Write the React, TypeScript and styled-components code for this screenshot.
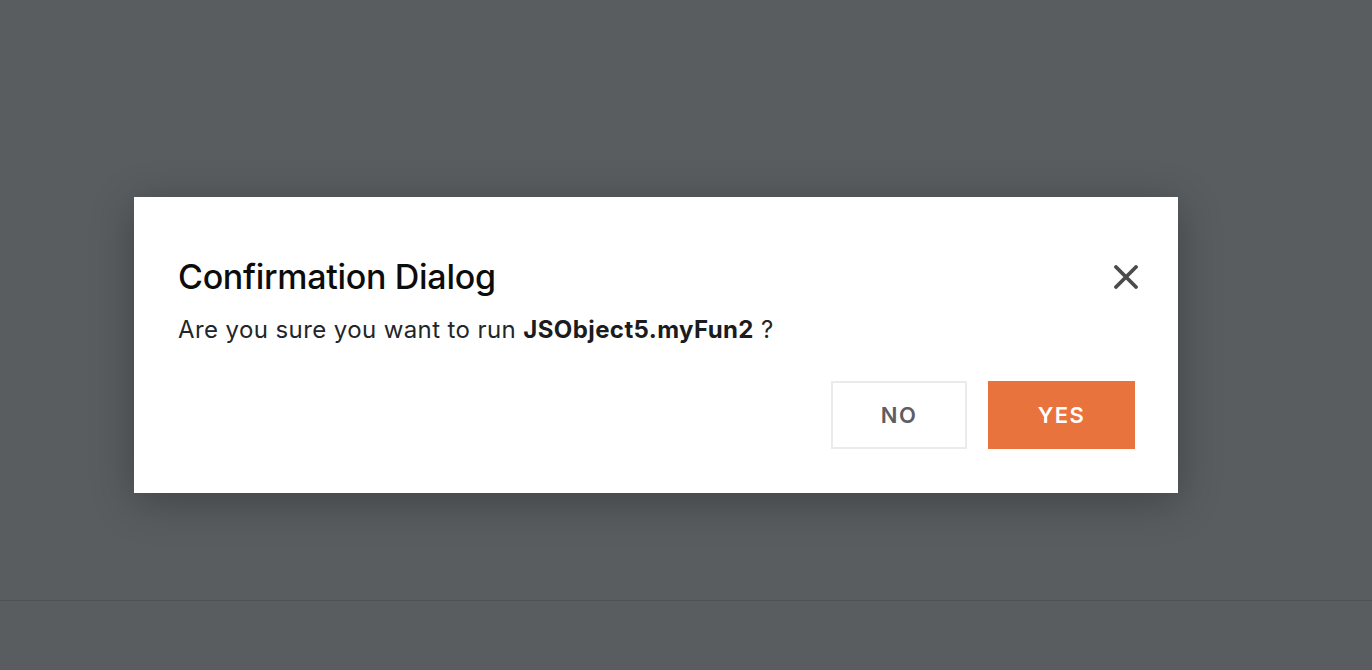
import React, { FC } from 'react';
import styled, { createGlobalStyle } from 'styled-components';

const GlobalStyle = createGlobalStyle`
  html, body {
    margin: 0;
    padding: 0;
    height: 100%;
  }
  body {
    font-family: Inter, 'Noto Sans', sans-serif;
    background: #595d60;
  }
`;

const Page = styled.div`
  display: flex;
  flex-direction: column;
  height: 670px;
  background: #595d60;
`;

const Stage = styled.div`
  flex: 1;
  display: flex;
  align-items: flex-start;
  padding: 197px 0 0 134px;
`;

const Footer = styled.div`
  height: 69px;
  border-top: 1px solid #4d5154;
`;

const Dialog = styled.div`
  width: 1044px;
  box-sizing: border-box;
  background: #ffffff;
  padding: 58px 43px 44px 44px;
  box-shadow: 0 8px 40px rgba(0, 0, 0, 0.28);
`;

const Header = styled.div`
  display: flex;
  align-items: center;
  justify-content: space-between;
`;

const Title = styled.h2`
  margin: 0;
  font-size: 34px;
  font-weight: 500;
  line-height: 44px;
  color: #0c0c0c;
  letter-spacing: -0.3px;
`;

const CloseButton = styled.button`
  display: flex;
  align-items: center;
  justify-content: center;
  width: 24px;
  height: 24px;
  padding: 0;
  margin-right: -3px;
  border: none;
  background: none;
  cursor: pointer;
`;

const Message = styled.p`
  margin: 15px 0 0;
  font-size: 24px;
  line-height: 32px;
  letter-spacing: 0.4px;
  color: #22252a;
`;

const Strong = styled.strong`
  font-weight: 700;
  color: #1a1c20;
`;

const Actions = styled.div`
  display: flex;
  justify-content: flex-end;
  gap: 21px;
  margin-top: 35px;
`;

const ActionButton = styled.button<{ $primary?: boolean }>`
  height: 68px;
  box-sizing: border-box;
  padding: 0;
  width: ${(p) => (p.$primary ? '147px' : '136px')};
  font-family: Inter, 'Noto Sans', sans-serif;
  font-size: 22px;
  font-weight: 600;
  letter-spacing: 1.4px;
  border: 2px solid ${(p) => (p.$primary ? '#e8733d' : '#ebebeb')};
  background: ${(p) => (p.$primary ? '#e8733d' : '#ffffff')};
  color: ${(p) => (p.$primary ? '#ffffff' : '#5e5d61')};
  cursor: pointer;
`;

const CloseIcon: FC = () => (
  <svg width="24" height="24" viewBox="0 0 24 24" fill="none">
    <path d="M2 2 L22 22 M22 2 L2 22" stroke="#4b4b4b" strokeWidth="3.8" strokeLinecap="round" />
  </svg>
);

const App: FC = () => (
  <>
    <GlobalStyle />
    <Page>
      <Stage>
        <Dialog role="dialog" aria-labelledby="confirm-title">
          <Header>
            <Title id="confirm-title">Confirmation Dialog</Title>
            <CloseButton aria-label="Close">
              <CloseIcon />
            </CloseButton>
          </Header>
          <Message>
            Are you sure you want to run <Strong>JSObject5.myFun2</Strong> ?
          </Message>
          <Actions>
            <ActionButton>NO</ActionButton>
            <ActionButton $primary>YES</ActionButton>
          </Actions>
        </Dialog>
      </Stage>
      <Footer />
    </Page>
  </>
);

export default App;
